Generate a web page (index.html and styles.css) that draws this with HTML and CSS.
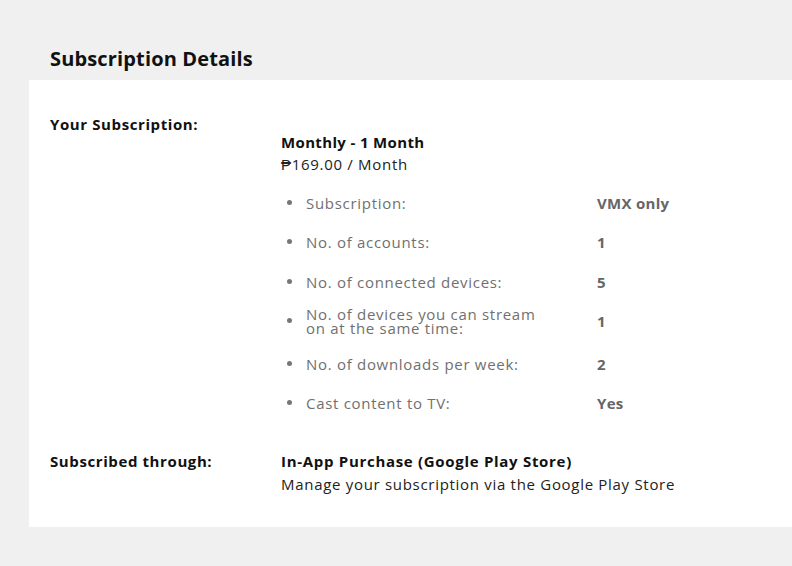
FILE: index.html
```html
<!DOCTYPE html>
<html lang="en">
<head>
    <meta charset="UTF-8">
    <meta name="viewport" content="width=device-width, initial-scale=1.0">
    <title>Subscription Details</title>
    <link rel="stylesheet" href="styles.css">
</head>
<body>
    <div class="page">
        <h1 class="page-title">Subscription Details</h1>

        <div class="card">
            <div class="row">
                <div class="label">Your Subscription:</div>
                <div class="content plan">
                    <div class="plan-name">Monthly - 1 Month</div>
                    <div class="plan-price">₱169.00 / Month</div>

                    <ul class="features">
                        <li>
                            <span class="feature-name">Subscription:</span>
                            <span class="feature-value">VMX only</span>
                        </li>
                        <li>
                            <span class="feature-name">No. of accounts:</span>
                            <span class="feature-value">1</span>
                        </li>
                        <li>
                            <span class="feature-name">No. of connected devices:</span>
                            <span class="feature-value">5</span>
                        </li>
                        <li class="tall">
                            <span class="feature-name">No. of devices you can stream on at the same time:</span>
                            <span class="feature-value">1</span>
                        </li>
                        <li>
                            <span class="feature-name">No. of downloads per week:</span>
                            <span class="feature-value">2</span>
                        </li>
                        <li>
                            <span class="feature-name">Cast content to TV:</span>
                            <span class="feature-value">Yes</span>
                        </li>
                    </ul>
                </div>
            </div>

            <div class="row">
                <div class="label">Subscribed through:</div>
                <div class="content">
                    <div class="store-name">In-App Purchase (Google Play Store)</div>
                    <div class="store-note">Manage your subscription via the Google Play Store</div>
                </div>
            </div>
        </div>
    </div>
</body>
</html>
```

FILE: styles.css
```css
body {
    margin: 0;
    font-family: "Open Sans", Arial, sans-serif;
    background-color: #f0f0f0;
    color: #111;
}
.page {
    padding: 46px 0 0 29px;
}
.page-title {
    margin: 0 0 8px 21px;
    font-size: 20px;
    font-weight: 700;
    line-height: 26px;
    letter-spacing: 0.15px;
    color: #111;
}
.card {
    background: #fff;
    padding: 34px 0 26px 21px;
    height: 387px;
}
.row {
    display: flex;
}
.row + .row {
    margin-top: 28px;
}
.label {
    width: 231px;
    font-size: 15px;
    font-weight: 700;
    line-height: 20px;
    letter-spacing: 0.6px;
}
.plan {
    padding-top: 18px;
}
.plan-name, .store-name {
    font-size: 15px;
    font-weight: 700;
    line-height: 20px;
}
.plan-name {
    letter-spacing: 0.35px;
}
.store-name {
    letter-spacing: 0.7px;
}
.plan-price, .store-note {
    font-size: 15px;
    line-height: 24px;
    letter-spacing: 0.7px;
    color: #222;
}
.features {
    list-style: none;
    margin: 7px 0 0;
    padding: 0;
}
.features li {
    display: flex;
    align-items: center;
    min-height: 39.5px;
    position: relative;
    padding-left: 25px;
    color: #707070;
    font-size: 15px;
    letter-spacing: 0.7px;
}
.features li.tall {
    margin-bottom: 3px;
}
.features li::before {
    content: "";
    position: absolute;
    left: 6px;
    top: 50%;
    width: 5px;
    height: 5px;
    margin-top: -3px;
    border-radius: 50%;
    background: #777;
}
.feature-name {
    width: 240px;
    margin-right: 51px;
    line-height: 14px;
}
.feature-value {
    font-weight: 700;
    color: #666;
    letter-spacing: 0.3px;
}
.store-note {
    margin-top: 1px;
}
```
